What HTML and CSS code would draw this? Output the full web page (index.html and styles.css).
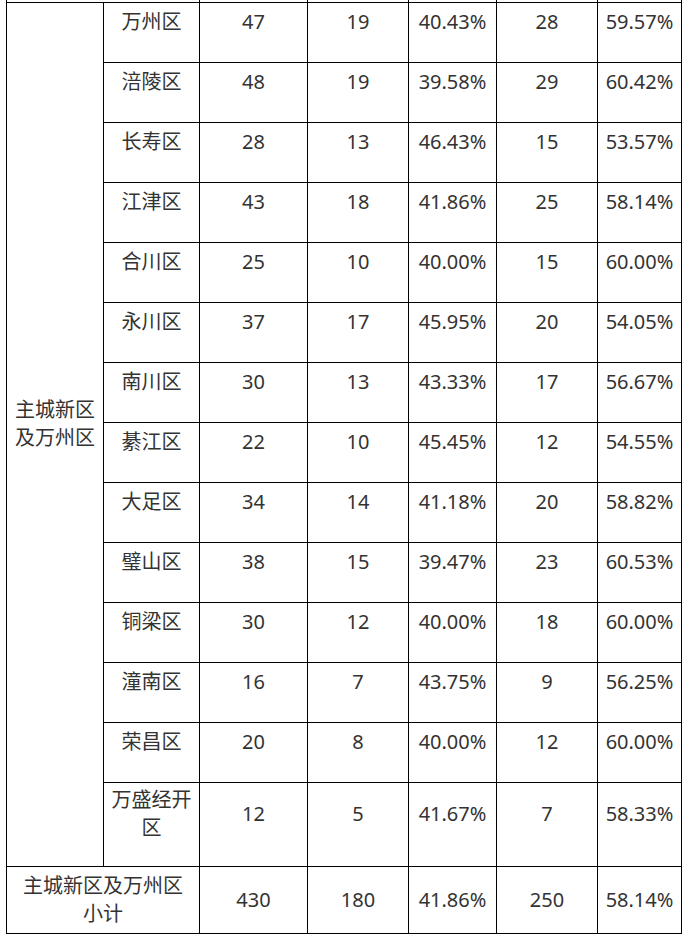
FILE: index.html
```html
<!DOCTYPE html>
<html lang="zh-CN">
<head>
<meta charset="utf-8">
<title>主城新区及万州区</title>
<link rel="stylesheet" href="styles.css">
</head>
<body>
<table class="stats">
  <colgroup>
    <col class="c1"><col class="c2"><col class="c3"><col class="c4"><col class="c5"><col class="c6"><col class="c7">
  </colgroup>
  <tbody>
    <tr class="cut"><td colspan="2"></td><td></td><td></td><td></td><td></td><td></td></tr>
    <tr class="row">
      <td class="region" rowspan="14"><p>主城新区及万州区</p></td>
      <td><p>万州区</p></td><td><p>47</p></td><td><p>19</p></td><td><p>40.43%</p></td><td><p>28</p></td><td><p>59.57%</p></td>
    </tr>
    <tr class="row"><td><p>涪陵区</p></td><td><p>48</p></td><td><p>19</p></td><td><p>39.58%</p></td><td><p>29</p></td><td><p>60.42%</p></td></tr>
    <tr class="row"><td><p>长寿区</p></td><td><p>28</p></td><td><p>13</p></td><td><p>46.43%</p></td><td><p>15</p></td><td><p>53.57%</p></td></tr>
    <tr class="row"><td><p>江津区</p></td><td><p>43</p></td><td><p>18</p></td><td><p>41.86%</p></td><td><p>25</p></td><td><p>58.14%</p></td></tr>
    <tr class="row"><td><p>合川区</p></td><td><p>25</p></td><td><p>10</p></td><td><p>40.00%</p></td><td><p>15</p></td><td><p>60.00%</p></td></tr>
    <tr class="row"><td><p>永川区</p></td><td><p>37</p></td><td><p>17</p></td><td><p>45.95%</p></td><td><p>20</p></td><td><p>54.05%</p></td></tr>
    <tr class="row"><td><p>南川区</p></td><td><p>30</p></td><td><p>13</p></td><td><p>43.33%</p></td><td><p>17</p></td><td><p>56.67%</p></td></tr>
    <tr class="row"><td><p>綦江区</p></td><td><p>22</p></td><td><p>10</p></td><td><p>45.45%</p></td><td><p>12</p></td><td><p>54.55%</p></td></tr>
    <tr class="row"><td><p>大足区</p></td><td><p>34</p></td><td><p>14</p></td><td><p>41.18%</p></td><td><p>20</p></td><td><p>58.82%</p></td></tr>
    <tr class="row"><td><p>璧山区</p></td><td><p>38</p></td><td><p>15</p></td><td><p>39.47%</p></td><td><p>23</p></td><td><p>60.53%</p></td></tr>
    <tr class="row"><td><p>铜梁区</p></td><td><p>30</p></td><td><p>12</p></td><td><p>40.00%</p></td><td><p>18</p></td><td><p>60.00%</p></td></tr>
    <tr class="row"><td><p>潼南区</p></td><td><p>16</p></td><td><p>7</p></td><td><p>43.75%</p></td><td><p>9</p></td><td><p>56.25%</p></td></tr>
    <tr class="row"><td><p>荣昌区</p></td><td><p>20</p></td><td><p>8</p></td><td><p>40.00%</p></td><td><p>12</p></td><td><p>60.00%</p></td></tr>
    <tr class="tall"><td class="left"><p>万盛经开区</p></td><td><p>12</p></td><td><p>5</p></td><td><p>41.67%</p></td><td><p>7</p></td><td><p>58.33%</p></td></tr>
    <tr class="total"><td colspan="2"><p>主城新区及万州区小计</p></td><td><p>430</p></td><td><p>180</p></td><td><p>41.86%</p></td><td><p>250</p></td><td><p>58.14%</p></td></tr>
  </tbody>
</table>
</body>
</html>
```
FILE: styles.css
```css
html, body {
  margin: 0;
  padding: 0;
  background: #ffffff;
}

.stats {
  margin: -39px 0 0 6px;
  border-collapse: collapse;
  table-layout: fixed;
  width: 675px;
  font-family: "Noto Sans", "Noto Sans CJK SC", sans-serif;
  font-size: 20px;
  color: #333333;
}

.c1 { width: 97px; }
.c2 { width: 96px; }
.c3 { width: 108px; }
.c4 { width: 101px; }
.c5 { width: 88px; }
.c6 { width: 101px; }
.c7 { width: 84px; }

.stats td {
  border: 1px solid #000000;
  padding: 3px 7px;
  text-align: center;
  vertical-align: middle;
}

.stats p {
  margin: 0 0 21px;
  line-height: 28px;
}

.cut td {
  height: 40px;
  padding: 0;
}

.row td {
  height: 53px;
}

.region p {
  margin-bottom: 21px;
}

.left {
  text-align: left;
}

.total td {
  padding: 5px 7px;
}

.total p {
  margin: 0;
}
```
